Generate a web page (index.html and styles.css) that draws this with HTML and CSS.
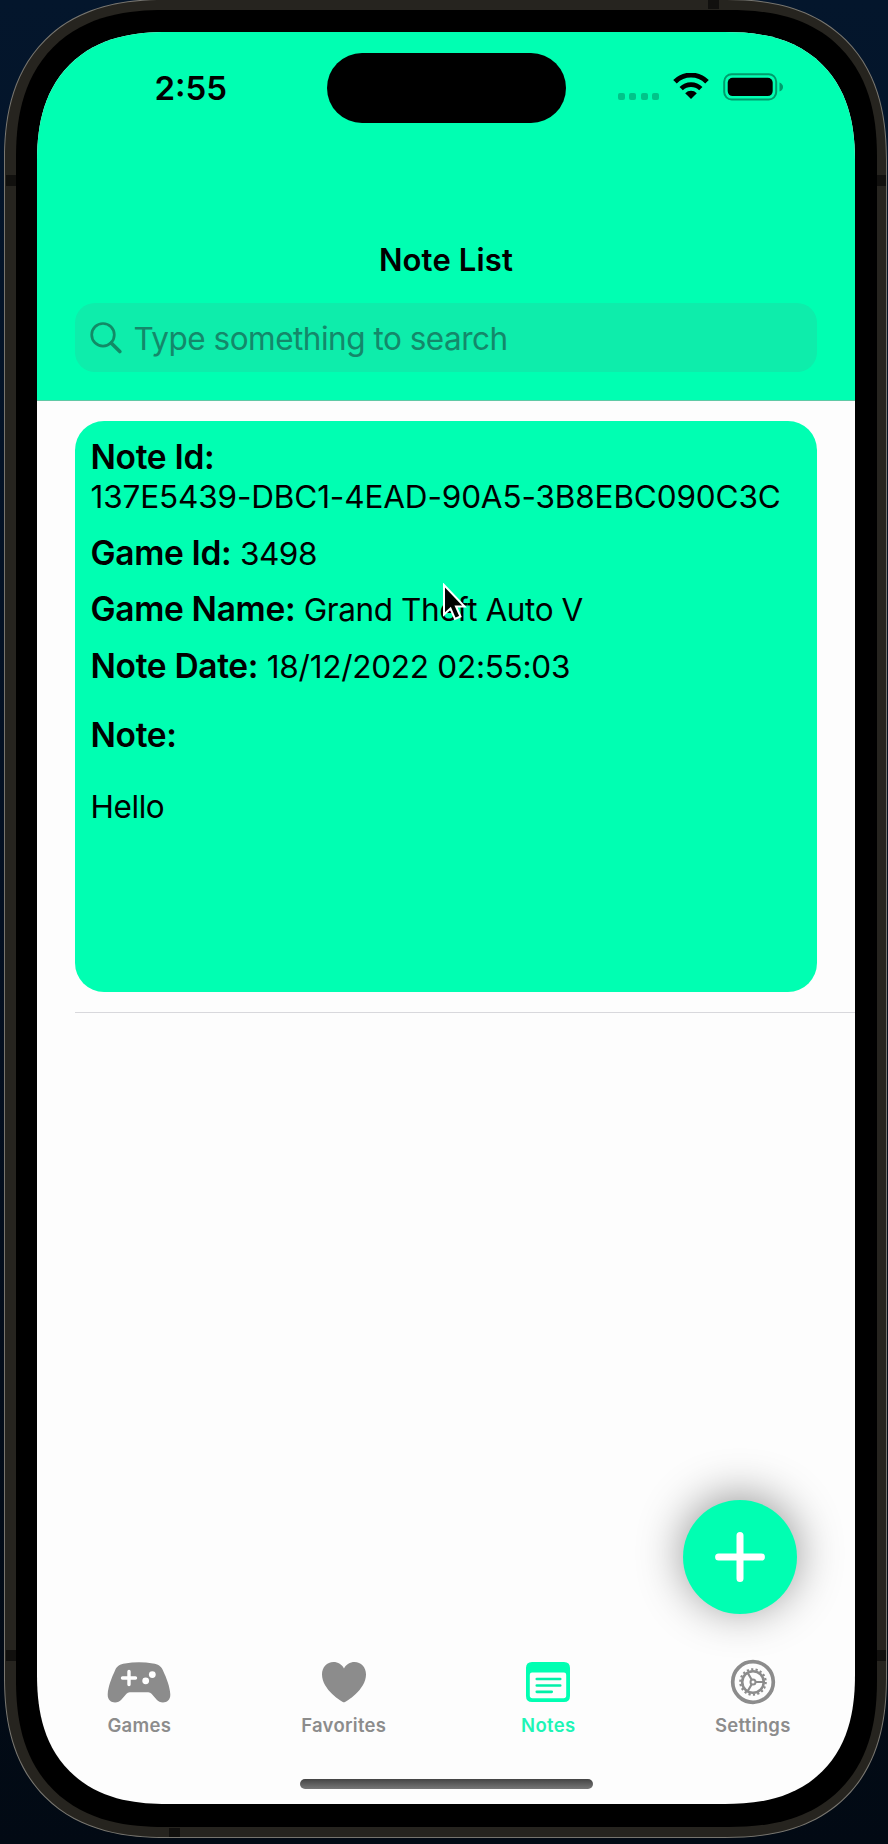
FILE: index.html
```html
<!DOCTYPE html>
<html lang="en">
<head>
<meta charset="utf-8">
<title>Note List</title>
<link rel="stylesheet" href="styles.css">
</head>
<body>
<div class="desktop">
  <div class="phone">
    <span class="band band-left-top"></span>
    <span class="band band-left-bottom"></span>
    <span class="band band-right-top"></span>
    <span class="band band-right-bottom"></span>
    <span class="band band-top"></span>
    <span class="band band-bottom"></span>
    <div class="bezel">
      <div class="screen">
        <header class="header">
          <div class="status">
            <span class="time">2:55</span>
            <span class="island"></span>
            <div class="status-icons">
              <span class="dots"><i></i><i></i><i></i><i></i></span>
              <svg class="wifi" viewBox="0 0 36 26" width="36" height="26">
                <path d="M2 8.800A22.500 22.500 0 0 1 34 8.800" fill="none" stroke="#000" stroke-width="5"/>
                <path d="M8.200 15.600A14 14 0 0 1 27.800 15.600" fill="none" stroke="#000" stroke-width="4.700"/>
                <path d="M18 26 12.200 20.200A8.300 8.300 0 0 1 23.800 20.200Z"/>
              </svg>
              <svg class="battery" viewBox="0 0 60 28" width="60" height="28">
                <rect x="1.200" y="1.200" width="52" height="25.400" rx="7.500" fill="none" stroke="#009c6c" stroke-width="2"/>
                <rect x="4.700" y="4.700" width="45" height="18.400" rx="5"/>
                <path d="M56.500 9.500q3.500 1.500 3.500 4.500t-3.500 4.500z" fill="#009c6c"/>
              </svg>
            </div>
          </div>
          <h1 class="title">Note List</h1>
          <div class="search">
            <svg class="search-icon" viewBox="0 0 32 32" width="32" height="32">
              <circle cx="13" cy="12.800" r="11.300" fill="none" stroke="#128a66" stroke-width="2.700"/>
              <path d="M21.200 21 29.800 29.600" stroke="#128a66" stroke-width="3.600" stroke-linecap="round"/>
            </svg>
            <span class="placeholder">Type something to search</span>
          </div>
        </header>
        <main class="list">
          <div class="row">
            <article class="card">
              <p class="field"><strong>Note Id:</strong><br><span class="uuid">137E5439-DBC1-4EAD-90A5-3B8EBC090C3C</span></p>
              <p class="field"><strong>Game Id:</strong> 3498</p>
              <p class="field"><strong>Game Name:</strong> Grand Theft Auto V</p>
              <p class="field date"><strong>Note Date:</strong> 18/12/2022 02:55:03</p>
              <p class="field note-label"><strong>Note:</strong></p>
              <p class="field note-text">Hello</p>
            </article>
          </div>
        </main>
        <button class="fab" aria-label="Add note">
          <svg viewBox="0 0 50 50" width="50" height="50"><path d="M25 3.600V46.400M3.600 25H46.400" stroke="#fff" stroke-width="7" stroke-linecap="round"/></svg>
        </button>
        <nav class="tabs">
          <a class="tab">
            <svg class="tab-icon" viewBox="0 0 64 46" width="64" height="46">
              <path fill="#8c8c8c" d="M18 4.600Q32 1.800 46 4.600C51 5.200 54 7 56 11.500C59.500 19 63 28 63.300 35.500C63.500 44.500 53.500 45.500 49.500 40.500L44.500 34.800Q43.300 33.300 41.300 33.300H22.700Q20.700 33.300 19.500 34.800L14.500 40.500C10.500 45.500 .5 44.500 .7 35.500C1 28 4.500 19 8 11.500C10 7 13 5.200 18 4.600Z"/>
              <path d="M22 12.500V25.500M15.500 19H28.500" stroke="#fff" stroke-width="3.400" stroke-linecap="round"/>
              <circle cx="38.700" cy="21.800" r="3.400" fill="#fff"/><circle cx="45.300" cy="15.600" r="3.400" fill="#fff"/>
            </svg>
            <span>Games</span>
          </a>
          <a class="tab">
            <svg class="tab-icon" viewBox="0 0 46 46" width="46" height="46">
              <path fill="#8c8c8c" d="M23 43.300C21 43.300 1 30.500 1 15.500C1 8 6 3 12.500 3C17 3 21 5.500 23 9.500C25 5.500 29 3 33.500 3C40 3 45 8 45 15.500C45 30.500 25 43.300 23 43.300Z"/>
            </svg>
            <span>Favorites</span>
          </a>
          <a class="tab tab-active">
            <svg class="tab-icon" viewBox="0 0 46 46" width="46" height="46">
              <path fill="#00ffb2" fill-rule="evenodd" d="M7 3H39Q45 3 45 9V37Q45 43 39 43H7Q1 43 1 37V9Q1 3 7 3ZM7 13.500Q4.800 13.500 4.800 15.700V36.500Q4.800 39.200 7.500 39.200H38.500Q41.200 39.200 41.200 36.500V15.700Q41.200 13.500 39 13.500Z"/>
              <path d="M11.800 20H35.200M11.800 26.500H35.200M11.800 32.800H26.700" stroke="#00f0a8" stroke-width="2.700" stroke-linecap="round"/>
            </svg>
            <span>Notes</span>
          </a>
          <a class="tab">
            <svg class="tab-icon" viewBox="0 0 46 46" width="46" height="46" fill="none" stroke="#8c8c8c">
              <circle cx="23" cy="23" r="20.300" stroke-width="3.700"/>
              <circle cx="23" cy="23" r="10.800" stroke-width="2.600"/>
              <circle cx="23" cy="23" r="12.700" stroke-width="2.200" stroke-dasharray="2.200 2.230"/>
              <circle cx="23" cy="23" r="2.500" stroke-width="2"/>
              <path d="M25.500 23H34M21.700 20.800 17.500 13.500M21.700 25.200 17.500 32.500" stroke-width="2.200"/>
            </svg>
            <span>Settings</span>
          </a>
        </nav>
        <div class="home"></div>
      </div>
    </div>
  </div>
  <svg class="cursor" viewBox="0 0 26 40" width="26" height="40">
    <path d="M2 2V31.500L8.500 25.500L13 36L18.500 33.500L14 23.500H22.500Z" fill="#000" stroke="#fff" stroke-width="2"/>
  </svg>
</div>
</body>
</html>
```

FILE: styles.css
```css
* { box-sizing: border-box; }

body {
  margin: 0;
  font-family: Inter, "Liberation Sans", sans-serif;
  color: #000;
}

.desktop {
  position: relative;
  display: flow-root;
  width: 888px;
  height: 1844px;
  overflow: hidden;
  background: linear-gradient(180deg, #04162c 0, #041022 50%, #020a14 100%);
}

.phone {
  position: relative;
  width: 883px;
  height: 1839px;
  margin: -1px 0 0 4px;
  padding: 10px 9px 10px 11px;
  border: 1px solid #77756f;
  border-radius: 142px;
  background: #26241f;
}

.bezel {
  height: 100%;
  padding: 22px 21px 23px;
  border-radius: 130px;
  background: #000;
}

.screen {
  position: relative;
  display: flex;
  flex-direction: column;
  width: 818px;
  height: 1772px;
  overflow: hidden;
  border-radius: 115px;
  background: #fdfdfd;
}

/* Continuous corner curve where the browser supports it */
@supports (corner-shape: superellipse(1.26)) {
  .phone { border-radius: 162px; corner-shape: superellipse(1.26); }
  .bezel { border-radius: 148px; corner-shape: superellipse(1.26); }
  .screen { border-radius: 130px; corner-shape: superellipse(1.26); }
}

.band { position: absolute; background: #11100e; }
.band-left-top { left: 1px; top: 175px; width: 10px; height: 11px; }
.band-left-bottom { left: 1px; top: 1650px; width: 10px; height: 11px; }
.band-right-top { right: 0; top: 175px; width: 9px; height: 11px; }
.band-right-bottom { right: 0; top: 1650px; width: 9px; height: 11px; }
.band-top { left: 703px; top: 0; width: 11px; height: 9px; }
.band-bottom { left: 164px; bottom: 0; width: 11px; height: 9px; }

.header {
  display: flex;
  flex-direction: column;
  height: 369px;
  background: #00ffb2;
  border-bottom: 1px solid #5fc9a5;
}

.status {
  display: grid;
  grid-template-columns: 290px 239px 1fr;
  align-items: start;
  height: 171px;
  padding-top: 21px;
}

.time {
  padding: 15px 0 0 117.500px;
  font-size: 33px;
  line-height: 40px;
  font-weight: 600;
}

.island { height: 70px; border-radius: 36px; background: #000; }

.status-icons { display: flex; padding: 20px 0 0 52px; }
.dots { display: flex; gap: 4.300px; margin: 20px 14px 0 0; }
.dots i { width: 7px; height: 7px; border-radius: 2px; background: #00c489; }
.battery { margin-left: 14.500px; }

.title {
  margin: 37px 0 0;
  font-size: 31px;
  line-height: 40px;
  font-weight: 600;
  letter-spacing: .15px;
  text-align: center;
}

.search {
  display: flex;
  align-items: center;
  height: 69px;
  margin: 23px 38px 0;
  padding: 1px 15px 0;
  gap: 11.500px;
  border-radius: 20px;
  background: #0eedab;
}

.placeholder {
  font-size: 31.500px;
  letter-spacing: -.5px;
  color: #14886a;
  white-space: nowrap;
}

.list { flex: 1; padding-left: 38px; }

.row {
  padding: 20px 38px 20px 0;
  border-bottom: 1.500px solid #d8d8dc;
}

.card {
  display: flex;
  flex-direction: column;
  gap: 17.500px;
  height: 571px;
  padding: 17px 15.500px;
  border-radius: 29px;
  background: #00ffb2;
}

.field {
  margin: 0;
  font-size: 31.500px;
  line-height: 39px;
  letter-spacing: -.42px;
  white-space: nowrap;
}

.field strong {
  font-size: 33.500px;
  line-height: 0;
  font-weight: 600;
  letter-spacing: -.33px;
}

.uuid { letter-spacing: -.14px; }
.date { letter-spacing: -.26px; }
.note-label { margin-top: 13px; }
.note-text { margin-top: 14.500px; }

.fab {
  position: absolute;
  right: 58px;
  bottom: 190px;
  display: grid;
  place-items: center;
  width: 114px;
  height: 114px;
  padding: 0;
  border: 0;
  border-radius: 50%;
  background: #00ffb2;
  box-shadow: 0 -4px 46px rgba(0, 0, 0, .42);
}

.tabs { display: flex; height: 120px; }

.tab {
  flex: 1;
  display: flex;
  flex-direction: column;
  align-items: center;
  font-size: 18.500px;
  line-height: 24px;
  font-weight: 600;
  letter-spacing: .3px;
  color: #8c8c8c;
}

.tab-icon { margin-bottom: 8px; }
.tab-active { color: #1df5b6; }

.home {
  width: 293px;
  height: 10px;
  margin: 0 auto 15px 262.500px;
  border-radius: 5px;
  background: linear-gradient(180deg, #444, #777);
}

.cursor { position: absolute; left: 442px; top: 583px; }
```
